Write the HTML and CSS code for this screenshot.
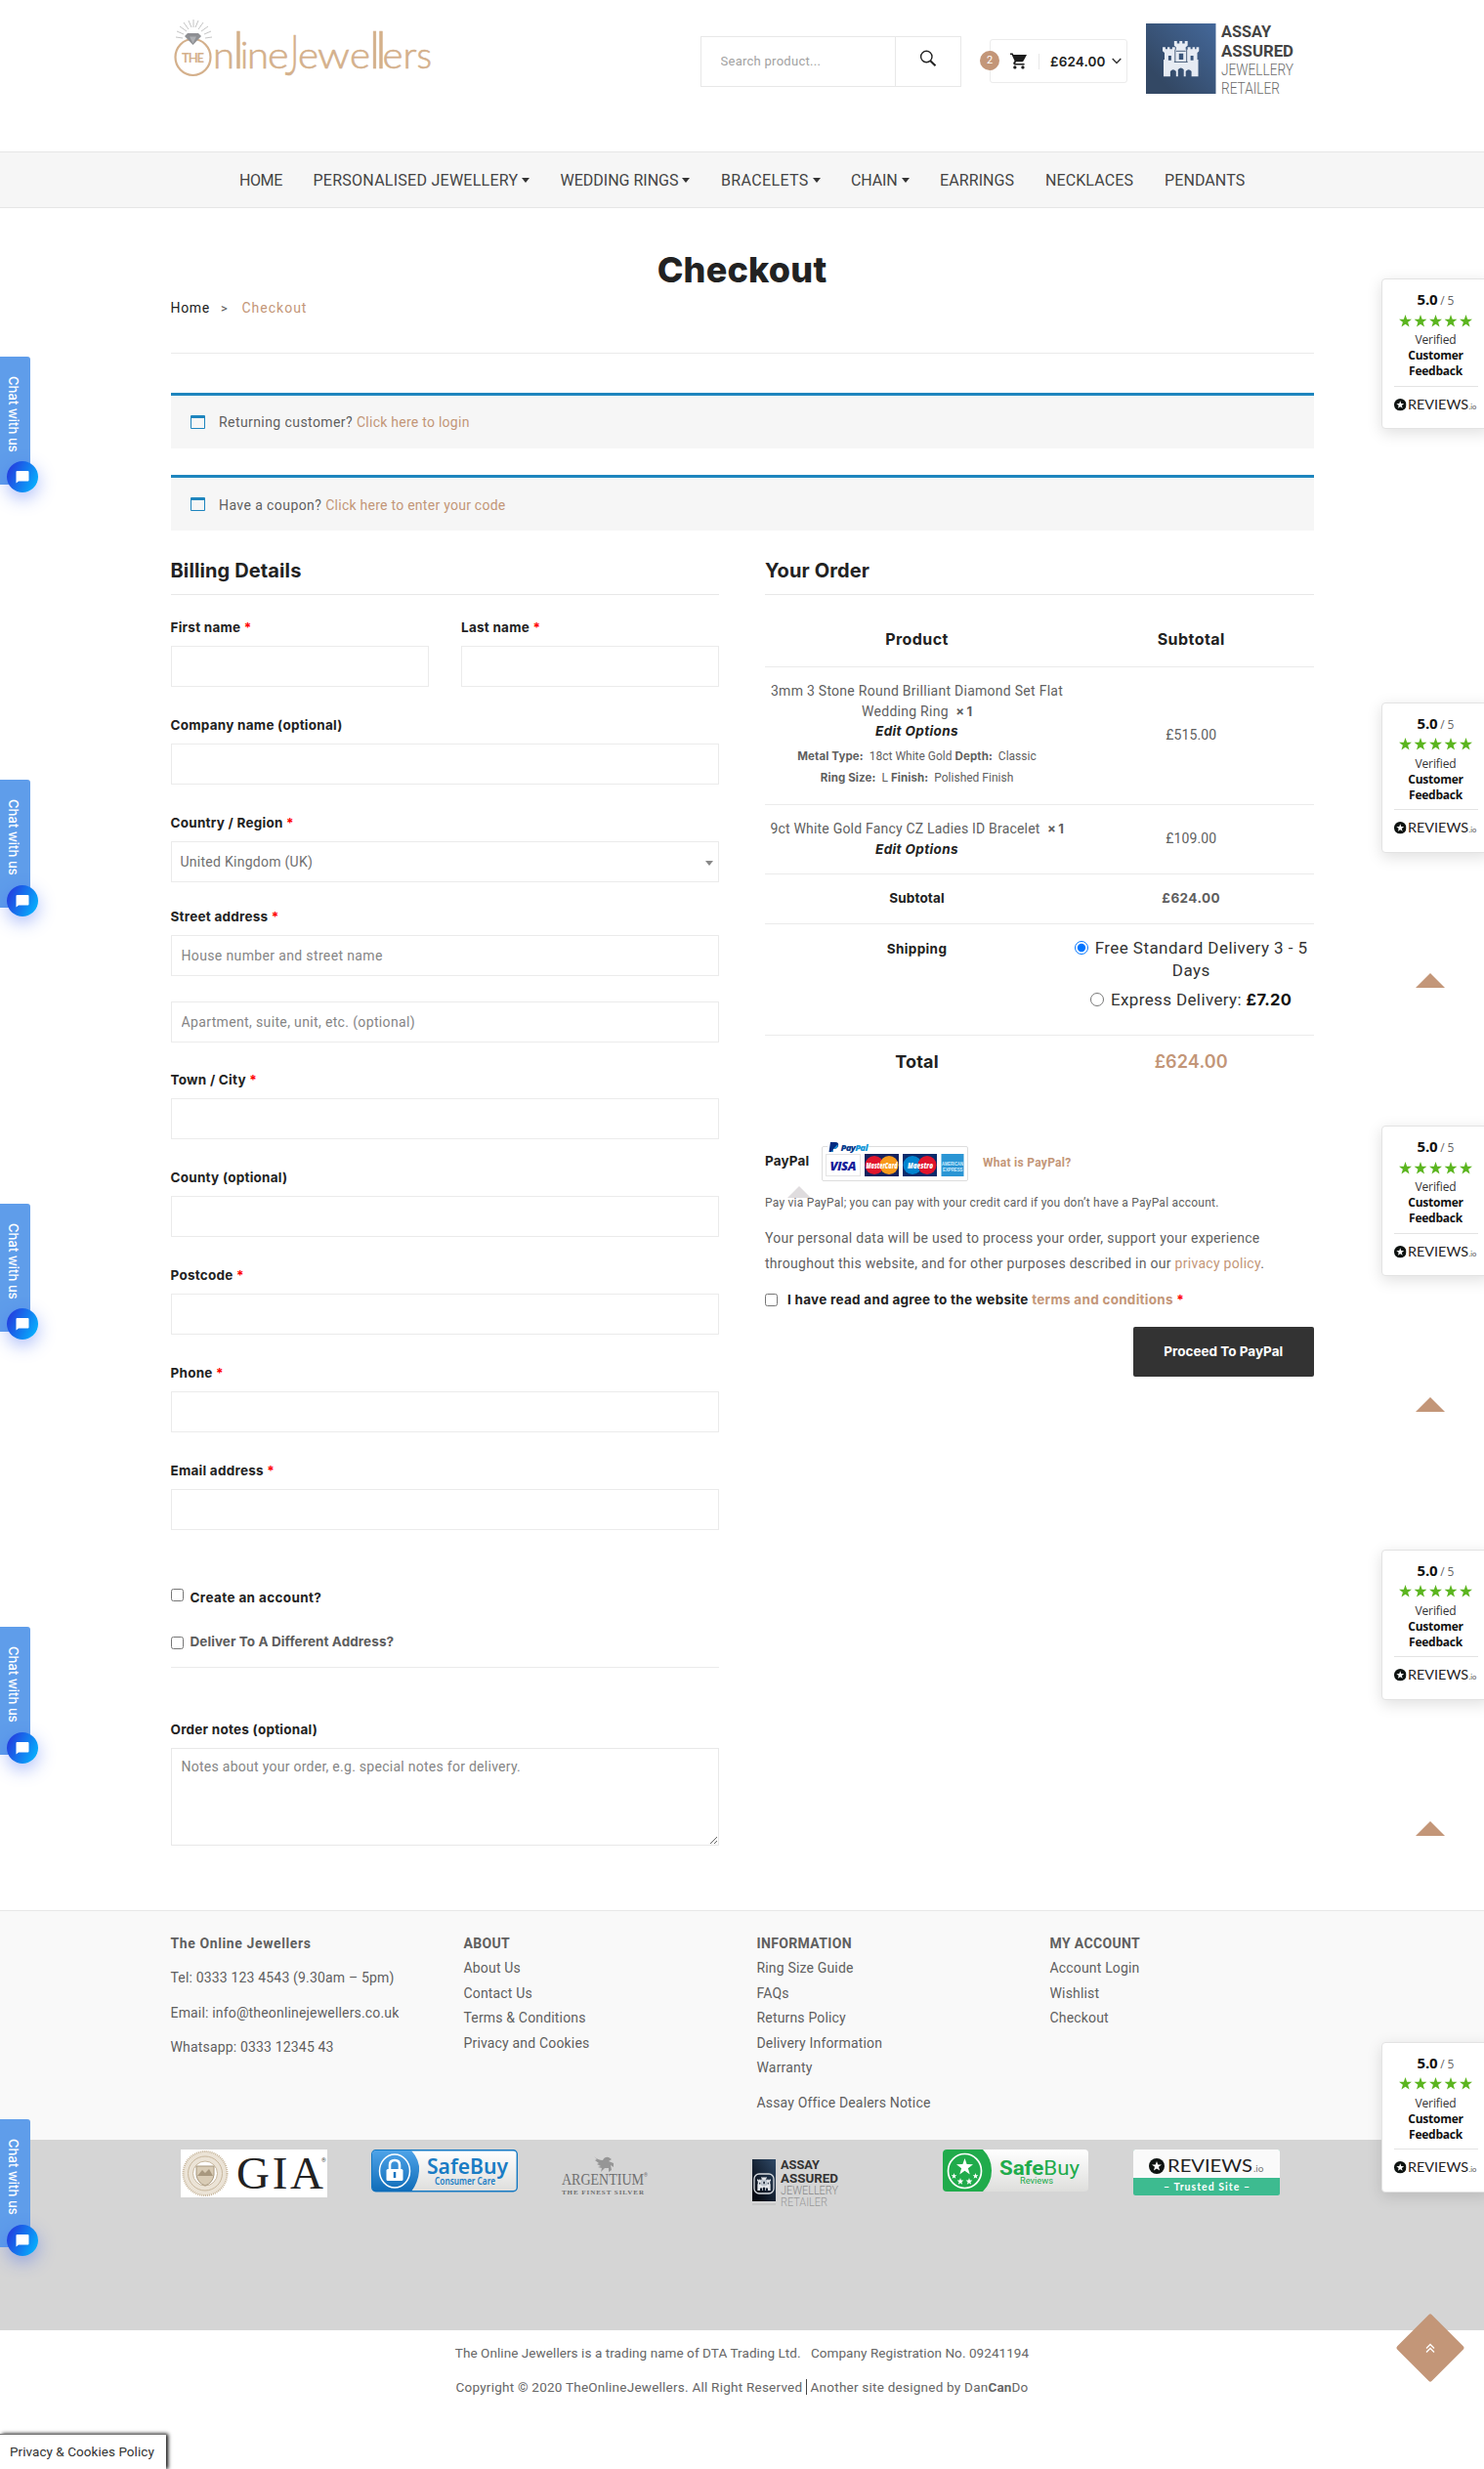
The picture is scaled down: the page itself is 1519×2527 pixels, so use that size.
FILE: index.html
```html
<!DOCTYPE html>
<html lang="en">
<head>
<meta charset="utf-8">
<title>Checkout</title>
<link rel="stylesheet" href="styles.css">
</head>
<body>
<svg class="defs" width="0" height="0">
  <defs>
    <linearGradient id="assayBlue" x1="1" y1="0" x2="0.2" y2="0.8"><stop offset="0" stop-color="#44689a"/><stop offset="1" stop-color="#334864"/></linearGradient>
    <linearGradient id="assayDark" x1="1" y1="0" x2="0.2" y2="0.9"><stop offset="0" stop-color="#2f4a68"/><stop offset="1" stop-color="#070b14"/></linearGradient>
    <linearGradient id="safeBlue" x1="0" y1="0" x2="0" y2="1"><stop offset="0" stop-color="#4fa3e8"/><stop offset="1" stop-color="#0f6cb8"/></linearGradient>
    <linearGradient id="pale" x1="0" y1="0" x2="0" y2="1"><stop offset="0" stop-color="#fff"/><stop offset="1" stop-color="#dededc"/></linearGradient>
    <symbol id="castle" viewBox="0 0 38 46" preserveAspectRatio="none"><path d="M12 0h3v3h2.500V0h3v3H23V0h3v6l-2 2v3h2V8h3v2.500h2V8h2.500v2.500H35V8h3v5l-2 2v9h1v22h-7v-7q-3-4-6 0v7h-2v-9q-3-5-6 0v9h-2v-7q-3-4-6 0v7H1V24h1v-9l-2-2V8h3v2.500h2V8h2.500v2.500H10V8h3v3h1V8l-2-2zM6 19v6h3v-6zM17 16v8h4.500v-8zM29 19v6h3v-6z" fill-rule="evenodd"/><path d="M12 27h14M14 13h10M13 11v16M25 11v16" fill="none" stroke="#39506f" stroke-width="1"/></symbol>
    <symbol id="star" viewBox="0 0 24 24"><path d="M12 0l3 8.600 9 .2-7.200 5.500 2.600 8.900L12 18l-7.400 5.200 2.600-8.900L0 8.800l9-.2z"/></symbol>
    <symbol id="reviewsMark" viewBox="0 0 24 24"><circle cx="12" cy="12" r="12" fill="#0e1311"/><path d="M12 4.500l1.900 5.300 5.600.1-4.500 3.400 1.600 5.500-4.600-3.200-4.600 3.200L9 13.300 4.500 9.900l5.600-.1z" fill="#fff"/></symbol>
  </defs>
</svg>

<header class="header wrap">
  <svg class="logo" width="264" height="62" viewBox="0 0 264 62">
    <g stroke="#c4c4c4" stroke-width="1"><path d="M1 20l7 1M2 14l7 3M5 9l7 5M9 5l5 7M14 3l3 7M19 2v8M24 3l-3 7M29 5l-5 7M34 9l-7 5M37 14l-7 3M38 20l-7 1"/></g>
    <ellipse cx="18.500" cy="40.500" rx="18" ry="18.500" fill="none" stroke="#d4b08b" stroke-width="2.200"/>
    <path d="M13 16h11l3 3-8.500 9-8.500-9z" fill="#8e8f93"/><path d="M15 19.500h7l-3.500 7z" fill="#aeb0b4"/>
    <g class="logo-text"><text x="7" y="46" font-size="13" textLength="23" class="logo-the">THE</text>
    <text y="52" font-size="37"><tspan x="39" textLength="22" lengthAdjust="spacingAndGlyphs">n</tspan><tspan x="59" font-size="54">l</tspan><tspan x="67">i</tspan><tspan x="74" textLength="22" lengthAdjust="spacingAndGlyphs">n</tspan><tspan x="95" textLength="21.500" lengthAdjust="spacingAndGlyphs">e</tspan></text>
    <text x="188" y="59" font-size="57" transform="scale(.6 1)">J</text>
    <text y="52" font-size="37"><tspan x="126" textLength="21" lengthAdjust="spacingAndGlyphs">e</tspan><tspan x="146" textLength="33" lengthAdjust="spacingAndGlyphs">w</tspan><tspan x="179" textLength="21" lengthAdjust="spacingAndGlyphs">e</tspan><tspan x="198.500" font-size="54">l</tspan><tspan x="205" font-size="54">l</tspan><tspan x="212.500" textLength="21" lengthAdjust="spacingAndGlyphs">e</tspan><tspan x="233.500" textLength="14" lengthAdjust="spacingAndGlyphs">r</tspan><tspan x="247.500" textLength="15.500" lengthAdjust="spacingAndGlyphs">s</tspan></text></g>
  </svg>
  <form class="search"><input type="text" placeholder="Search product..."><span class="search-btn"><svg width="18" height="18" viewBox="0 0 18 18" fill="none" stroke="#222" stroke-width="1.400"><circle cx="7.300" cy="7" r="5.700"/><path d="M11.300 11.200l5.200 5" stroke-width="2"/></svg></span></form>
  <div class="cart">
    <span class="cart-count">2</span>
    <svg width="17" height="17" viewBox="1 2 21 20" fill="#1d1d1d"><path d="M7 18c-1.100 0-2 .9-2 2s.9 2 2 2 2-.9 2-2-.9-2-2-2zM1 2v2h2l3.600 7.600L5.200 14c-.7 1.300.3 3 1.800 3h12v-2H7.400l1.100-2h7.500c.7 0 1.400-.4 1.700-1L22 4H5.200l-.9-2zM17 18c-1.100 0-2 .9-2 2s.9 2 2 2 2-.9 2-2-.9-2-2-2z"/></svg>
    <span class="cart-total">£624.00</span>
    <svg width="10" height="7" viewBox="0 0 10 7" fill="none" stroke="#333" stroke-width="1.400"><path d="M.7 1l4.300 4.500L9.300 1"/></svg>
  </div>
  <svg class="assay" width="152" height="76" viewBox="0 0 152 76">
    <rect width="71.500" height="72" fill="url(#assayBlue)"/><use href="#castle" x="17" y="18" width="37.500" height="36.500" fill="#e6ebf3"/>
    <g class="din" font-size="16"><text x="77" y="14" font-weight="700" fill="#444" textLength="51" lengthAdjust="spacingAndGlyphs">ASSAY</text><text x="77" y="34" font-weight="700" fill="#444" textLength="74" lengthAdjust="spacingAndGlyphs">ASSURED</text><text x="77" y="53" font-weight="300" fill="#6b6b6b" textLength="74" lengthAdjust="spacingAndGlyphs">JEWELLERY</text><text x="77" y="72" font-weight="300" fill="#6b6b6b" textLength="60" lengthAdjust="spacingAndGlyphs">RETAILER</text></g>
  </svg>
</header>

<nav class="nav">
  <a class="n-home">HOME</a><a class="n-pers drop">PERSONALISED JEWELLERY</a><a class="n-wed drop">WEDDING RINGS</a><a class="n-bra drop">BRACELETS</a><a class="n-cha drop">CHAIN</a><a class="n-ear">EARRINGS</a><a class="n-nec">NECKLACES</a><a class="n-pen">PENDANTS</a>
</nav>

<main class="wrap">
  <h1>Checkout</h1>
  <div class="crumbs"><span>Home</span><i>&gt;</i><em>Checkout</em></div>
  <div class="notice"><span class="notice-icon"></span><p>Returning customer? <a>Click here to login</a></p></div>
  <div class="notice"><span class="notice-icon"></span><p>Have a coupon? <a>Click here to enter your code</a></p></div>

  <div class="columns">
    <section class="billing">
      <h2>Billing Details</h2>
      <div class="pair">
        <div class="field"><label>First name <s>*</s></label><input></div>
        <div class="field"><label>Last name <s>*</s></label><input></div>
      </div>
      <div class="field"><label>Company name (optional)</label><input></div>
      <div class="field country"><label>Country / Region <s>*</s></label><div class="select">United Kingdom (UK)</div></div>
      <div class="field street"><label>Street address <s>*</s></label><input placeholder="House number and street name"></div>
      <div class="field apt"><input placeholder="Apartment, suite, unit, etc. (optional)"></div>
      <div class="field"><label>Town / City <s>*</s></label><input></div>
      <div class="field"><label>County (optional)</label><input></div>
      <div class="field"><label>Postcode <s>*</s></label><input></div>
      <div class="field"><label>Phone <s>*</s></label><input></div>
      <div class="field"><label>Email address <s>*</s></label><input></div>
      <label class="check create"><input type="checkbox"><span>Create an account?</span></label>
      <label class="check deliver"><input type="checkbox"><span>Deliver To A Different Address?</span></label>
      <div class="notes"><label>Order notes (optional)</label><textarea placeholder="Notes about your order, e.g. special notes for delivery."></textarea></div>
    </section>

    <section class="order">
      <h2>Your Order</h2>
      <div class="table">
        <div class="row head"><b>Product</b><b>Subtotal</b></div>
        <div class="row item">
          <div><p>3mm 3 Stone Round Brilliant Diamond Set Flat Wedding Ring&nbsp; <b>× 1</b></p><p class="edit">Edit Options</p>
            <p class="meta"><b>Metal Type:</b>&nbsp; 18ct White Gold <b>Depth:</b>&nbsp; Classic</p><p class="meta"><b>Ring Size:</b>&nbsp; L <b>Finish:</b>&nbsp; Polished Finish</p></div>
          <span class="price">£515.00</span>
        </div>
        <div class="row item two">
          <div><p class="bracelet">9ct White Gold Fancy CZ Ladies ID Bracelet&nbsp; <b>× 1</b></p><p class="edit">Edit Options</p></div>
          <span class="price">£109.00</span>
        </div>
        <div class="row sub"><b>Subtotal</b><strong>£624.00</strong></div>
        <div class="row ship"><b>Shipping</b>
          <div><label class="opt"><input type="radio" name="s" checked> Free Standard Delivery 3 - 5 Days</label><label class="opt"><input type="radio" name="s"> Express Delivery: <strong>£7.20</strong></label></div>
        </div>
        <div class="row total"><b>Total</b><strong>£624.00</strong></div>
      </div>

      <div class="pay">
        <b>PayPal</b>
        <svg width="150" height="42" viewBox="0 0 150 42">
          <rect x=".5" y="5.500" width="149" height="35" rx="1.500" fill="#fff" stroke="#ddd"/><rect x="6" y="0" width="42" height="11" fill="#fff"/>
          <path d="M9 1h5q4 0 3 4-1 3-5 3l-.5 3H7.500z" fill="#002a80"/><path d="M16.500 3q1 5-4.500 5l-.6 3H9.500" fill="#1b8fd6"/>
          <text x="19.500" y="10" font-size="9.500" class="pp" fill="#053a8b" textLength="28"><tspan>Pay</tspan><tspan fill="#1597d7">Pal</tspan></text>
          <rect x="4.500" y="13.500" width="35" height="22" fill="#fff" stroke="#e4e4e4"/><text x="8.500" y="30" font-size="13" class="pp" fill="#15209a" textLength="27">VISA</text>
          <rect x="44" y="13" width="35" height="23" fill="#15235f"/><circle cx="54" cy="24.500" r="9.500" fill="#e1152c"/><circle cx="69" cy="24.500" r="9.500" fill="#f79a1b"/><text x="45.500" y="27.500" font-size="8" class="pp" fill="#fff" textLength="32" lengthAdjust="spacingAndGlyphs">MasterCard</text>
          <rect x="83" y="13" width="35" height="23" fill="#0b2c6c"/><circle cx="93" cy="24.500" r="9.500" fill="#0083cf"/><circle cx="108" cy="24.500" r="9.500" fill="#e1152c"/><text x="88" y="27.500" font-size="8" class="pp" fill="#fff" textLength="26" lengthAdjust="spacingAndGlyphs">Maestro</text>
          <rect x="122.500" y="13" width="23" height="23" fill="#2a95d4"/><text x="123" y="24.500" font-size="6" class="amex" textLength="22" lengthAdjust="spacingAndGlyphs">AMERICAN</text><text x="124" y="31" font-size="6" class="amex" textLength="20.500" lengthAdjust="spacingAndGlyphs">EXPRESS</text>
        </svg>
        <a>What is PayPal?</a>
      </div>
      <p class="via">Pay via PayPal; you can pay with your credit card if you don’t have a PayPal account.</p>
      <p class="privacy">Your personal data will be used to process your order, support your experience throughout this website, and for other purposes described in our <a>privacy policy</a>.</p>
      <label class="check terms"><input type="checkbox"><span>I have read and agree to the website <a>terms and conditions</a> <s>*</s></span></label>
      <button>Proceed To PayPal</button>
    </section>
  </div>
</main>

<footer>
  <div class="links-band">
    <div class="links wrap">
      <div class="contact"><b>The Online Jewellers</b><p>Tel: 0333 123 4543 (9.30am – 5pm)</p><p>Email: info@theonlinejewellers.co.uk</p><p>Whatsapp: 0333 12345 43</p></div>
      <div><b>ABOUT</b><a>About Us</a><a>Contact Us</a><a>Terms &amp; Conditions</a><a>Privacy and Cookies</a></div>
      <div><b>INFORMATION</b><a>Ring Size Guide</a><a>FAQs</a><a>Returns Policy</a><a>Delivery Information</a><a>Warranty</a><p>Assay Office Dealers Notice</p></div>
      <div><b>MY ACCOUNT</b><a>Account Login</a><a>Wishlist</a><a>Checkout</a></div>
    </div>
  </div>
  <div class="badges-band">
    <div class="badges wrap">
      <svg width="150" height="60" viewBox="0 0 150 60"><rect width="150" height="49" fill="#fff"/><circle cx="25" cy="24.500" r="22.500" fill="#ebe3d6" stroke="#c8b79d" stroke-width="2" stroke-dasharray="1 1"/><circle cx="25" cy="24.500" r="17.500" fill="none" stroke="#c8b79d"/><circle cx="25" cy="24.500" r="12.500" fill="#fff" stroke="#c8b79d"/><path d="M16 17h18v9q-1 8-9 11-8-3-9-11z" fill="#d9ccb6" stroke="#a8987f"/><path d="M17 27l5-6 3 3 4-4 4 7z" fill="#a8987f"/><text x="57" y="40" font-size="47" class="serif" fill="#222" textLength="89">GIA</text><text x="144" y="13" font-size="6" fill="#444">®</text></svg>
      <svg width="150" height="60" viewBox="0 0 150 60"><rect x=".7" y=".7" width="148.600" height="42" rx="4" fill="url(#pale)" stroke="#1479c4" stroke-width="1.400"/><path d="M5 1h36q9 10 8 21-1 12-8 21H5q-4 0-4-4V5q0-4 4-4z" fill="url(#safeBlue)"/><ellipse cx="24" cy="22" rx="15.500" ry="17" fill="none" stroke="#fff" stroke-width="1.500"/><path d="M19 21v-5q0-5 5-5t5 5v5" fill="none" stroke="#fff" stroke-width="2.600"/><rect x="15.500" y="20" width="17" height="12" rx="1.500" fill="#fff"/><path d="M24 23v6" stroke="#1a75c0" stroke-width="2.500"/><text x="57" y="25" font-size="21" class="round" font-weight="600" fill="#1a7cc4" textLength="83" lengthAdjust="spacingAndGlyphs">SafeBuy</text><text x="65" y="36" font-size="10" class="round" font-weight="600" fill="#1a7cc4" textLength="62" lengthAdjust="spacingAndGlyphs">Consumer Care</text></svg>
      <svg width="150" height="60" viewBox="0 0 150 60" fill="#6f6f6f"><path d="M33 7q4 4 9 4 2-4 6-3l3 2-3 2 5 2 0 4-3-2 1 5-3 2 0-4-4 0-4 4 1-4-4-1 3-1-4-2 2-1-4-3 2-1z" fill="#969696"/><text x="0" y="36" font-size="16" class="serif" textLength="84" lengthAdjust="spacingAndGlyphs">ARGENTIUM</text><text x="84" y="28" font-size="5">®</text><text x="0" y="46" font-size="7" class="serif" font-weight="700" textLength="84" lengthAdjust="spacing">THE FINEST SILVER</text></svg>
      <svg width="150" height="60" viewBox="0 0 150 60"><rect y="10" width="24" height="43" fill="url(#assayDark)"/><path d="M0 56h24" stroke="#bbb"/><rect x="2" y="25" width="20" height="20" rx="5" fill="none" stroke="#d7dbe0" stroke-width="1.300"/><use href="#castle" x="5" y="28" width="14" height="14" fill="#e3e6ea"/><g class="din"><text x="29" y="20" font-size="13" font-weight="700" fill="#333" textLength="40" lengthAdjust="spacingAndGlyphs">ASSAY</text><text x="29" y="34" font-size="13" font-weight="700" fill="#333" textLength="59" lengthAdjust="spacingAndGlyphs">ASSURED</text><text x="29" y="46" font-size="12" font-weight="300" fill="#888" textLength="59" lengthAdjust="spacingAndGlyphs">JEWELLERY</text><text x="29" y="58" font-size="12" font-weight="300" fill="#999" textLength="48" lengthAdjust="spacingAndGlyphs">RETAILER</text></g></svg>
      <svg width="150" height="60" viewBox="0 0 150 60"><rect width="149" height="43" rx="4" fill="url(#pale)"/><path d="M4 0h37q9 9 9 21.500T41 43H4q-4 0-4-4V4q0-4 4-4z" fill="#20ab4b"/><ellipse cx="22.500" cy="22" rx="17" ry="17.500" fill="none" stroke="#fff" stroke-width="1.700"/><g fill="#fff"><use href="#star" x="14" y="9" width="17" height="17"/><use href="#star" x="8.500" y="24" width="6" height="6"/><use href="#star" x="30.500" y="24" width="6" height="6"/><use href="#star" x="14.500" y="29" width="7" height="7"/><use href="#star" x="23.500" y="29" width="7" height="7"/></g><text x="58" y="26" font-size="21" class="din" fill="#20ab4b" textLength="82" lengthAdjust="spacingAndGlyphs"><tspan font-weight="700">Safe</tspan>Buy</text><text x="79" y="35" font-size="9" class="din" fill="#20ab4b" textLength="34" lengthAdjust="spacingAndGlyphs">Reviews</text></svg>
      <svg width="150" height="60" viewBox="0 0 150 60"><rect width="150" height="47" rx="2.500" fill="#3dbb90"/><path d="M2 0h146q2 0 2 2v27H0V2q0-2 2-2z" fill="#fafafa"/><use href="#reviewsMark" x="16" y="9" width="16" height="16"/><text x="35" y="23" font-size="18" class="geo" fill="#222" textLength="87" lengthAdjust="spacingAndGlyphs">REVIEWS</text><text x="123" y="23" font-size="10" class="geo" fill="#777">.io</text><text x="31" y="42" font-size="10.500" class="geo" font-weight="700" fill="#fff" textLength="88">– Trusted Site –</text></svg>
    </div>
  </div>
  <div class="copy"><p class="c1">The Online Jewellers is a trading name of DTA Trading Ltd.&nbsp;&nbsp; Company Registration No. 09241194</p><p class="c2">Copyright © 2020 TheOnlineJewellers. All Right Reserved <u></u> Another site designed by Dan<b>Can</b>Do</p></div>
</footer>

<div id="floats"></div>
<div class="tri t1"></div><div class="tri t2"></div><div class="tri t3"></div>
<div class="to-top"><svg width="12" height="12" viewBox="0 0 12 12" fill="none" stroke="#fff" stroke-width="1.300"><path d="M2 6.500l4-4 4 4M2 10.500l4-4 4 4"/></svg></div>
<div class="policy">Privacy &amp; Cookies Policy</div>
<template id="float-tpl">
  <div class="chat"><span>Chat with us</span></div>
  <div class="chat-dot"><svg width="14" height="14" viewBox="0 0 14 14"><path d="M1.500 1h11q1 0 1 1v8.500q0 1-1 1H3L.5 13.500V2q0-1 1-1z" fill="#fff"/></svg></div>
  <div class="rating">
    <p class="score"><b>5.0</b> / 5</p>
    <svg width="76" height="13" viewBox="0 0 76 13" fill="#5bb51f"><use href="#star" x="0" width="13" height="13"/><use href="#star" x="15.500" width="13" height="13"/><use href="#star" x="31" width="13" height="13"/><use href="#star" x="46.500" width="13" height="13"/><use href="#star" x="62" width="13" height="13"/></svg>
    <p>Verified</p><p><b>Customer</b></p><p><b>Feedback</b></p>
    <div class="rev"><svg width="86" height="16" viewBox="0 0 86 16"><use href="#reviewsMark" x="0" y="2" width="12.500" height="12.500"/><text x="14" y="13" font-size="14" class="geo" fill="#222" textLength="62" lengthAdjust="spacingAndGlyphs">REVIEWS</text><text x="76.500" y="13" font-size="7.500" class="geo" fill="#555">.io</text></svg></div>
  </div>
</template>
<script src="floats.js"></script>
</body>
</html>
```
FILE: floats.js
```js
// The chat tab and the rating card repeat down the page.
const tpl = document.getElementById('float-tpl');
const host = document.getElementById('floats');
for (const top of [285, 718.5, 1152, 1585.5, 2089.5]) {
  const group = document.createElement('div');
  group.className = 'float';
  group.style.top = top + 'px';
  group.append(tpl.content.cloneNode(true));
  host.append(group);
}
```
FILE: styles.css
```css
* { box-sizing: border-box; }
body { margin: 0; position: relative; height: 2527px; overflow-x: hidden; background: #fff; color: #5f5f5f; font: 14px/25.5px Roboto, "Open Sans", sans-serif; letter-spacing: .27px; }
p, h1, h2 { margin: 0; }
s { color: #f00; text-decoration: none; }
.defs { position: absolute; }
input, textarea, button { font: inherit; letter-spacing: inherit; }
.wrap { width: 1170px; margin: 0 auto; }
a { color: #c39678; }
b, strong, label, h1, h2, button { font-family: Inter, Roboto, sans-serif; font-weight: 700; }
b, strong, label { letter-spacing: .14px; }

.header { height: 155px; display: flex; align-items: flex-start; }
.logo { margin: 18px 0 0 4px; overflow: visible; }
.logo-text { font-family: Lato, sans-serif; font-weight: 300; fill: #d4b08b; stroke: #d4b08b; stroke-width: .6px; letter-spacing: 0; }
.logo-the { font-weight: 700; stroke: none; }
.search { margin: 36.500px 0 0 274px; width: 267px; height: 52px; display: flex; border: 1px solid #e8e8e8; }
.search input { flex: 1; min-width: 0; padding: 0 20px; border: 0; font-size: 13px; outline: 0; }
.search input::placeholder { color: #a2a2a2; }
.search-btn { width: 67px; border-left: 1px solid #e8e8e8; display: flex; align-items: center; justify-content: center; }
.search-btn svg { margin-top: -5px; }
.cart { position: relative; width: 141px; height: 45px; margin: 40px 0 0 29.500px; border: 1px solid #ebebeb; border-radius: 3px; display: flex; align-items: center; padding-left: 20px; }
.cart-count { position: absolute; left: -11px; top: 11px; width: 20px; height: 20px; border-radius: 50%; background: #c39678; color: #fff; font-size: 11px; line-height: 20px; text-align: center; letter-spacing: 0; }
.cart-total { font: 600 13.500px/16px Inter, sans-serif; letter-spacing: .15px; color: #222; margin: 0 5px 0 12px; padding-left: 11px; border-left: 1px solid #e8e8e8; width: 70px; }
.assay { margin: 24px 0 0 18.500px; overflow: visible; letter-spacing: 0; }

.nav { height: 58px; border: solid #e6e6e6; border-width: 1px 0; background: #f6f6f6; display: flex; padding-left: 245px; }
.nav a { font-size: 16px; line-height: 58px; color: #444; letter-spacing: .1px; white-space: nowrap; flex: none; }
.drop::after { content: ""; display: inline-block; border: 4.500px solid transparent; border-top: 5px solid #333; border-bottom: 0; margin-left: 4px; vertical-align: 3px; }
.n-home { width: 75.500px; letter-spacing: -.4px !important; }
.n-pers { width: 253px; letter-spacing: .26px !important; }
.n-wed { width: 164.500px; letter-spacing: 0 !important; }
.n-bra { width: 133px; letter-spacing: .35px !important; }
.n-cha { width: 91px; letter-spacing: -.1px !important; }
.n-ear { width: 108px; }
.n-nec { width: 122px; }

h1 { padding-top: 41px; text-align: center; font-weight: 800; font-size: 36px; line-height: 44px; letter-spacing: .2px; color: #222; }
.crumbs { height: 59.500px; margin-top: 4px; border-bottom: 1px solid #ebebeb; margin-bottom: 40px; line-height: 26px; letter-spacing: .7px; color: #222; }
.crumbs i { font-style: normal; margin: 0 14px 0 11px; color: #555; font-size: 13px; }
.crumbs em { font-style: normal; color: #c39678; letter-spacing: 1px; }
.notice { height: 57px; background: #f6f6f6; border-top: 3px solid #1e85be; margin-bottom: 27.500px; display: flex; align-items: center; padding-left: 20.500px; }
.notice p { margin-left: 14px; padding-top: 3px; letter-spacing: .42px; }
.notice a { letter-spacing: .26px; }
.notice-icon { width: 15px; height: 14px; border: 1px solid #1e85be; border-top-width: 3px; border-radius: 1px; }

.columns { display: grid; grid-template-columns: 561.500px 561.500px; gap: 47px; }
h2 { height: 38px; border-bottom: 1px solid #e8e8e8; font-size: 20px; line-height: 26px; letter-spacing: .12px; color: #222; }
.billing { display: flex; flex-direction: column; }
.billing h2 { margin-bottom: 21px; }
.pair { display: grid; grid-template-columns: 264px 264px; justify-content: space-between; }
.field { height: 100px; display: flex; flex-direction: column; }
.field label, .notes label { line-height: 25px; margin-bottom: 6.500px; color: #222; font-size: 13.500px; letter-spacing: .25px; }
.field input, .select { height: 42px; width: 100%; border: 1px solid #ebebeb; padding: 0 10px; outline: 0; background: #fff; flex: none; }
::placeholder { color: #858585; opacity: 1; }
.field input::placeholder { letter-spacing: .36px; }
.select { padding: 0 5px 0 9px; line-height: 40px; color: #707070; display: flex; justify-content: space-between; align-items: center; }
.select::after { content: ""; border: 4px solid transparent; border-top: 5px solid #888; border-bottom: 0; margin-top: 3px; }
.country { height: 96px; }
.street { height: 99px; }
.apt { height: 68px; }
.check { display: flex; height: 25px; line-height: 25px; font-size: 13.500px; color: #222; }
.check input { width: 13px; height: 13px; margin: 6px 7px 0 0; flex: none; }
.create { margin-top: 30px; letter-spacing: .38px; }
.create input { margin-top: 3px; }
.deliver { margin-top: 20.500px; height: 39px; border-bottom: 1px solid #ebebeb; color: #5c5c5c; letter-spacing: .08px; }
.deliver input { margin-top: 7px; }
.notes { margin-top: 50.500px; display: flex; flex-direction: column; }
.notes textarea { height: 100px; border: 1px solid #e8e8e8; padding: 5px 10px; line-height: 26px; outline: 0; }

.table { text-align: center; }
.order h2 { margin-bottom: 19.500px; }
.row { display: grid; grid-template-columns: 311px 250.500px; border-bottom: 1px solid #ebebeb; line-height: 20.600px; align-items: center; }
.row > b { color: #222; }
.head { height: 54.500px; font-size: 16px; }
.head b { letter-spacing: .44px; }
.item { height: 141px; }
.item > div { align-self: start; padding-top: 14.500px; white-space: nowrap; }
.item p { white-space: normal; padding: 0 2px; }
.item b { font-size: 13px; letter-spacing: -.3px; }
.item .edit { font: italic 700 13.500px/20.600px Inter, sans-serif; color: #222; letter-spacing: .38px; }
.item .meta { font-size: 12px; line-height: 22.500px; letter-spacing: 0; position: relative; top: 4px; }
.item .meta b { font-size: 11.500px; letter-spacing: .12px; }
.price { letter-spacing: .15px; }
.two { height: 71px; }
.item .bracelet { letter-spacing: .2px; white-space: nowrap; padding: 0; }
.sub { height: 51px; font-size: 13.500px; }
.sub strong { letter-spacing: .45px; }
.ship { height: 114px; align-items: start; font-size: 13.500px; }
.ship > b { padding-top: 15.500px; letter-spacing: .4px; }
.ship > div { padding-top: 13.500px; }
.opt { display: block; font: 400 17px/22.500px Roboto, sans-serif; letter-spacing: .44px; color: #333; margin-bottom: 8px; }
.opt input { width: 14px; height: 14px; margin: 0 2px 0 0; vertical-align: -1px; }
.opt:last-child { letter-spacing: .38px; }
.opt strong { color: #111; letter-spacing: .3px; font-size: 16.500px; }
.total { height: 56px; border: 0; font-size: 18px; }
.total b { letter-spacing: .2px; }
.total strong { color: #c39678; font-weight: 600; letter-spacing: .15px; }
.pay { margin-top: 51px; display: flex; align-items: center; height: 45px; letter-spacing: 0; }
.pay b { width: 58px; font-size: 13.500px; color: #222; }
.pay a { font: 700 12px/20px Roboto, sans-serif; letter-spacing: .28px; margin-left: 15px; padding-top: 2px; }
.via { position: relative; font-size: 12px; line-height: 20px; letter-spacing: .23px; margin-top: 9px; z-index: 0; }
.via::before { content: ""; position: absolute; z-index: -1; left: 23px; top: -7px; border: 12.500px solid transparent; border-bottom-color: #dfdcde; border-top: 0; }
.privacy { margin-top: 14.500px; letter-spacing: .28px; }
.terms { margin-top: 12px; letter-spacing: .28px; }
.terms input { margin-right: 10px; }
button { display: block; width: 184.500px; height: 51px; margin: 15px 0 0 auto; border: 0; border-radius: 2px; background: #333; color: #fff; font-size: 13.500px; letter-spacing: 0; }

footer { position: absolute; top: 1955px; left: 0; right: 0; }
.links-band { height: 235px; background: #f9f9f9; border-top: 1px solid #e8e8e8; padding-top: 20.500px; }
.links { display: grid; grid-template-columns: repeat(4, 300px); letter-spacing: .17px; }
.links div { display: flex; flex-direction: column; }
.links a { color: inherit; }
.links b { font: 700 14px/25.500px Roboto, sans-serif; letter-spacing: .35px; }
.links .contact b { letter-spacing: .61px; }
.links p { margin-top: 10px; }
.badges-band { height: 195px; background: #d5d5d5; }
.badges { display: grid; grid-template-columns: repeat(6, 195px); padding: 10px 0 0 10px; }
.badges svg, .rating svg { letter-spacing: 0; overflow: visible; }
.serif { font-family: "Liberation Serif", serif; }
.round { font-family: "Noto Sans", sans-serif; }
.geo { font-family: Lato, sans-serif; }
.din { font-family: Roboto, sans-serif; }
.pp { font-family: "Open Sans", sans-serif; font-weight: 800; font-style: italic; letter-spacing: 0; }
.amex { font-family: "Liberation Sans", sans-serif; font-weight: 700; fill: #d4efff; letter-spacing: 0; }
.copy { padding-top: 10.500px; text-align: center; font-size: 13.500px; color: #666; }
.copy p { margin-bottom: 9.500px; white-space: nowrap; }
.c1 { letter-spacing: .07px; }
.c2 { letter-spacing: .24px; }
.copy u { display: inline-block; width: 1px; height: 16px; background: #444; vertical-align: -3px; }
.copy b { font: 700 13.500px/20px Roboto, sans-serif; }

.float { position: absolute; left: 0; right: 0; height: 0; }
.rating { position: absolute; left: 1414px; top: 0; width: 111px; height: 154px; background: #fff; border: 1px solid #e3e3e3; border-radius: 4px; box-shadow: 0 4px 16px rgba(0,0,0,.13); display: flex; flex-direction: column; align-items: center; font: 12px/16.200px "Open Sans", sans-serif; letter-spacing: -.1px; color: #333; padding-top: 12px; }
.rating b { font: 700 12px/16px "Open Sans", sans-serif; letter-spacing: -.25px; color: #111; }
.rating .score { line-height: 20px; height: 23.500px; color: #666; }
.rating .score b { font-size: 15px; }
.rating > svg { margin-bottom: 5.500px; flex: none; }
.rev { width: 86px; margin-top: 6px; padding-top: 10px; border-top: 1px solid #e3e3e3; line-height: 0; }
.chat { position: absolute; left: 0; top: 79.500px; width: 30.500px; height: 131px; background: #5f9dea; border-radius: 0 3px 3px 0; display: flex; justify-content: center; padding-top: 20px; padding-right: 3px; }
.chat span { writing-mode: vertical-rl; color: #fff; font: 500 13px/18px Inter, sans-serif; letter-spacing: .05px; }
.chat-dot { position: absolute; left: 7px; top: 187px; width: 32px; height: 32px; border-radius: 50%; background: linear-gradient(115deg, #233ddf 10%, #08a8fb 85%); box-shadow: 0 6px 18px rgba(50,90,240,.4); display: flex; align-items: center; justify-content: center; }
.tri { position: absolute; left: 1449px; border: 15px solid transparent; border-top: 0; border-bottom-color: #c39678; }
.t1 { top: 996px; }
.t2 { top: 1430px; }
.t3 { top: 1863.500px; }
.to-top { position: absolute; left: 1439px; top: 2378px; width: 50px; height: 50px; background: #c39678; border-radius: 2px; transform: rotate(45deg); display: flex; align-items: center; justify-content: center; }
.to-top svg { transform: rotate(-45deg); }
.policy { position: absolute; left: 0; top: 2491px; width: 170px; height: 36px; background: #fff; border-top: 1px solid #777; box-shadow: 2px 0 4px #000; color: #333; font-size: 13.500px; line-height: 34px; padding-left: 10px; letter-spacing: .05px; }
```
